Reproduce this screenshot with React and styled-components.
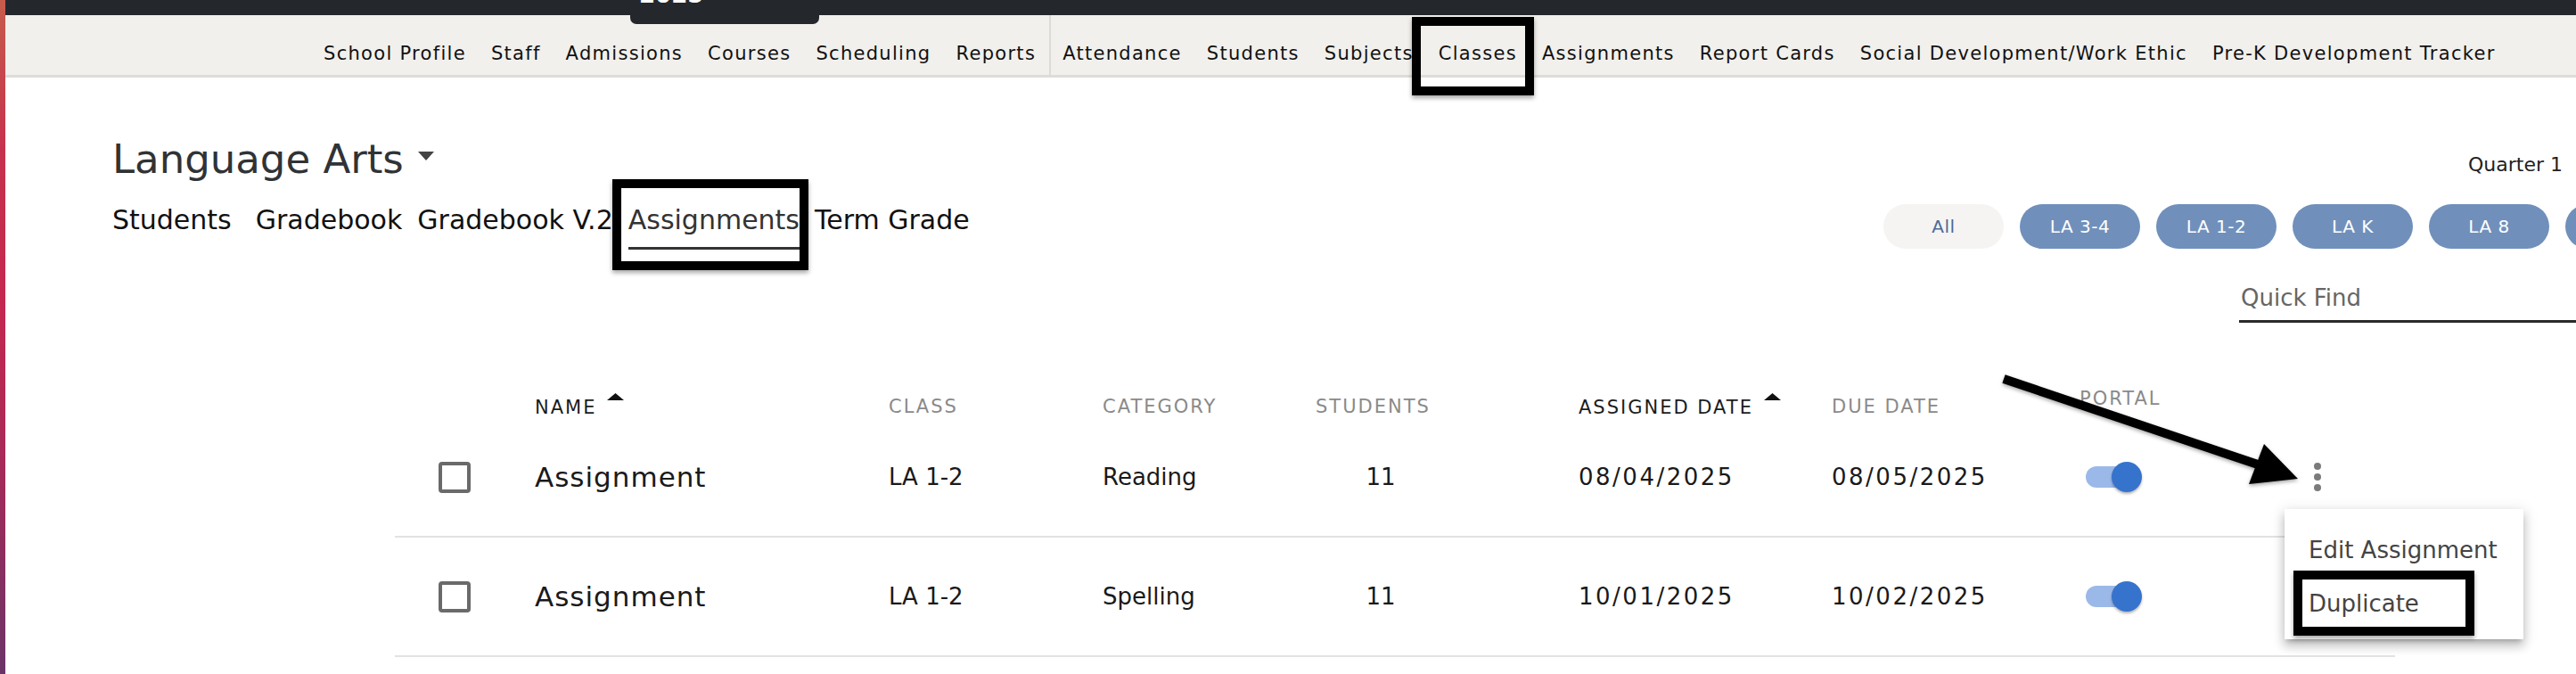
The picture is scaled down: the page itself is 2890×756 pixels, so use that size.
import React from "react";
import styled, { createGlobalStyle, css } from "styled-components";

const GlobalStyle = createGlobalStyle`
  html, body {
    margin: 0;
    padding: 0;
    background: #ffffff;
    overflow: hidden;
  }
  body {
    font-family: "DejaVu Sans", "Open Sans", sans-serif;
    color: #1a1a1a;
  }
  * {
    box-sizing: border-box;
  }
`;

const Screen = styled.div`
  display: flex;
  width: 2890px;
  height: 756px;
  overflow: hidden;
`;

const DesktopEdge = styled.div`
  width: 6px;
  flex-shrink: 0;
  background: linear-gradient(
    180deg,
    #c65c4c 0%,
    #c6324d 22%,
    #c4284f 45%,
    #a82a58 68%,
    #6a3468 100%
  );
`;

const Window = styled.div`
  position: relative;
  flex: 1;
  min-width: 0;
  background: #ffffff;
`;

const TopBar = styled.div`
  height: 17px;
  background: #24282d;
`;

const YearTab = styled.div`
  position: absolute;
  left: 701px;
  top: 0;
  width: 212px;
  height: 27px;
  padding-left: 10px;
  background: #24282d;
  border-radius: 0 0 7px 7px;
  overflow: hidden;
  z-index: 2;

  span {
    display: block;
    margin-top: -19px;
    font-size: 26px;
    line-height: 26px;
    font-weight: bold;
    color: #ffffff;
  }
`;

const NavBar = styled.nav`
  display: flex;
  align-items: stretch;
  gap: 28px;
  height: 70px;
  padding-left: 357px;
  background: #f1f0ec;
  border-bottom: 3px solid #dddcd7;
`;

const NavGroup = styled.div`
  display: flex;
  align-items: center;
  gap: 28px;
  padding-top: 19px;
  ${(p) =>
    p.$divided &&
    css`
      border-left: 2px solid #dcdbd6;
      margin-left: -13px;
      padding-left: 13px;
    `}
`;

const NavLink = styled.a`
  font-size: 21px;
  letter-spacing: 1.3px;
  color: #111111;
  white-space: nowrap;
`;

const Content = styled.main`
  padding: 64px 15px 0 120px;
`;

const TitleRow = styled.div`
  display: flex;
  justify-content: space-between;
  align-items: center;
  height: 56px;
`;

const Title = styled.h1`
  margin: 0;
  display: flex;
  align-items: center;
  font-size: 45px;
  line-height: 56px;
  font-weight: normal;
  color: #303336;
  white-space: nowrap;
`;

const TitleCaret = styled.svg`
  margin-left: 16px;
  margin-bottom: 8px;
`;

const Quarter = styled.div`
  margin-top: 12px;
  font-size: 22px;
  line-height: 28px;
  color: #222222;
`;

const TabsRow = styled.div`
  display: flex;
  justify-content: space-between;
  align-items: center;
  height: 53px;
  margin-top: 20px;
`;

const Tabs = styled.div`
  display: flex;
  gap: 17px;
  align-self: stretch;
`;

const Tab = styled.a`
  font-size: 30px;
  line-height: 40px;
  padding-bottom: 10px;
  border-bottom: 3px solid ${(p) => (p.$active ? "#333333" : "transparent")};
  color: ${(p) => (p.$active ? "#333333" : "#111111")};
  white-space: nowrap;

  &:first-child {
    margin-right: 10px;
  }
`;

const Pills = styled.div`
  display: flex;
  gap: 18px;
  flex-shrink: 0;
  margin-right: -291px;
`;

const Pill = styled.button`
  width: 135px;
  height: 50px;
  border: none;
  border-radius: 25px;
  padding: 0;
  font-family: inherit;
  font-size: 20px;
  letter-spacing: 0.5px;
  background: ${(p) => (p.$all ? "#f5f4f2" : "#7090bb")};
  color: ${(p) => (p.$all ? "#4c6a99" : "#ffffff")};
`;

const QuickRow = styled.div`
  display: flex;
  justify-content: flex-end;
  margin-top: 37px;
`;

const QuickFind = styled.input`
  width: 420px;
  height: 45px;
  margin-right: -57px;
  padding: 0 0 8px 2px;
  border: none;
  border-bottom: 3px solid #2a2a2a;
  outline: none;
  background: transparent;
  font-family: inherit;
  font-size: 26px;
  line-height: 34px;
  color: #333333;

  &::placeholder {
    color: #666666;
  }
`;

const gridColumns = css`
  display: grid;
  grid-template-columns: 157px 397px 240px 239px 295px 284px 278px 263px 91px;
  align-items: center;
`;

const Table = styled.div`
  width: 2244px;
  margin: 79px 0 0 317px;
`;

const HeaderRow = styled.div`
  ${gridColumns};
  height: 28px;
`;

const HeadCell = styled.div`
  font-size: 21px;
  line-height: 28px;
  letter-spacing: 2px;
  color: ${(p) => (p.$active ? "#1c1c1c" : "#8a8a8a")};
  white-space: nowrap;
  ${(p) => p.$raised && "margin-top: -18px;"}
`;

const SortCaret = styled.svg`
  margin-left: 12px;
  vertical-align: 15px;
`;

const Row = styled.div`
  ${gridColumns};
  height: 134px;
  border-bottom: 2px solid #e2e2e2;
`;

const Checkbox = styled.span`
  display: block;
  width: 36px;
  height: 35px;
  margin-left: 49px;
  border: 4px solid #6a6a6a;
  border-radius: 4px;
`;

const Cell = styled.div`
  font-size: ${(p) => (p.$large ? "31px" : "26px")};
  letter-spacing: ${(p) => (p.$large ? "1px" : p.$date ? "2.5px" : "0")};
  color: #1a1a1a;
  white-space: nowrap;
  ${(p) =>
    p.$centered &&
    css`
      width: 146px;
      text-align: center;
    `}
`;

const Switch = styled.div`
  position: relative;
  width: 63px;
  height: 34px;
  margin-left: 7px;
`;

const SwitchTrack = styled.span`
  position: absolute;
  left: 0;
  top: 5px;
  width: 58px;
  height: 24px;
  border-radius: 12px;
  background: #9bb9e8;
`;

const SwitchKnob = styled.span`
  position: absolute;
  right: 0;
  top: 0;
  width: 34px;
  height: 34px;
  border-radius: 50%;
  background: #3673cd;
  box-shadow: 0 2px 3px rgba(0, 0, 0, 0.3);
`;

const Kebab = styled.svg`
  display: block;
`;

const Menu = styled.ul`
  position: absolute;
  left: 2557px;
  top: 571px;
  width: 268px;
  height: 146px;
  margin: 0;
  padding: 16px 0 10px;
  list-style: none;
  background: #ffffff;
  box-shadow: 0 5px 5px -3px rgba(0, 0, 0, 0.2),
    0 8px 10px 1px rgba(0, 0, 0, 0.14), 0 3px 14px 2px rgba(0, 0, 0, 0.12);
  z-index: 3;
`;

const MenuItem = styled.li`
  height: 60px;
  padding-left: 27px;
  font-size: 26px;
  line-height: 60px;
  color: #444444;
  white-space: nowrap;
`;

const Callout = styled.div`
  position: absolute;
  left: ${(p) => p.$x}px;
  top: ${(p) => p.$y}px;
  width: ${(p) => p.$w}px;
  height: ${(p) => p.$h}px;
  border: 10px solid #000000;
  box-shadow: 0 3px 5px rgba(0, 0, 0, 0.35);
  z-index: 4;
  pointer-events: none;
`;

const Arrow = styled.svg`
  position: absolute;
  left: 2230px;
  top: 410px;
  z-index: 4;
  overflow: visible;
`;

const primaryNav = ["School Profile", "Staff", "Admissions", "Courses", "Scheduling", "Reports"];
const classNav = [
  "Attendance",
  "Students",
  "Subjects",
  "Classes",
  "Assignments",
  "Report Cards",
  "Social Development/Work Ethic",
  "Pre-K Development Tracker",
];
const tabs = ["Students", "Gradebook", "Gradebook V.2", "Assignments", "Term Grade"];
const pills = ["All", "LA 3-4", "LA 1-2", "LA K", "LA 8", "LA 5-6", "LA 7"];

const assignments = [
  { name: "Assignment", cls: "LA 1-2", category: "Reading", students: 11, assigned: "08/04/2025", due: "08/05/2025" },
  { name: "Assignment", cls: "LA 1-2", category: "Spelling", students: 11, assigned: "10/01/2025", due: "10/02/2025" },
];

const Caret = () => (
  <SortCaret width="19" height="8" viewBox="0 0 19 8">
    <polygon points="9.5,0 19,8 0,8" fill="#111" />
  </SortCaret>
);

const App = () => {
  return (
    <Screen>
      <GlobalStyle />
      <DesktopEdge />
      <Window>
        <TopBar />
        <YearTab>
          <span>2025</span>
        </YearTab>
        <NavBar>
          <NavGroup>
            {primaryNav.map((item) => (
              <NavLink key={item}>{item}</NavLink>
            ))}
          </NavGroup>
          <NavGroup $divided>
            {classNav.map((item) => (
              <NavLink key={item}>{item}</NavLink>
            ))}
          </NavGroup>
        </NavBar>

        <Content>
          <TitleRow>
            <Title>
              Language Arts
              <TitleCaret width="18" height="10" viewBox="0 0 18 10">
                <polygon points="0,0 18,0 9,10" fill="#444" />
              </TitleCaret>
            </Title>
            <Quarter>Quarter 1</Quarter>
          </TitleRow>

          <TabsRow>
            <Tabs>
              {tabs.map((t) => (
                <Tab key={t} $active={t === "Assignments"}>
                  {t}
                </Tab>
              ))}
            </Tabs>
            <Pills>
              {pills.map((p) => (
                <Pill key={p} $all={p === "All"}>
                  {p}
                </Pill>
              ))}
            </Pills>
          </TabsRow>

          <QuickRow>
            <QuickFind placeholder="Quick Find" />
          </QuickRow>

          <Table>
            <HeaderRow>
              <div />
              <HeadCell $active>
                NAME
                <Caret />
              </HeadCell>
              <HeadCell>CLASS</HeadCell>
              <HeadCell>CATEGORY</HeadCell>
              <HeadCell>STUDENTS</HeadCell>
              <HeadCell $active>
                ASSIGNED DATE
                <Caret />
              </HeadCell>
              <HeadCell>DUE DATE</HeadCell>
              <HeadCell $raised>PORTAL</HeadCell>
              <div />
            </HeaderRow>
            {assignments.map((a, i) => (
              <Row key={i}>
                <Checkbox />
                <Cell $large>{a.name}</Cell>
                <Cell>{a.cls}</Cell>
                <Cell>{a.category}</Cell>
                <Cell $centered>{a.students}</Cell>
                <Cell $date>{a.assigned}</Cell>
                <Cell $date>{a.due}</Cell>
                <Switch>
                  <SwitchTrack />
                  <SwitchKnob />
                </Switch>
                <div>
                  {i === 0 && (
                    <Kebab width="8" height="32" viewBox="0 0 8 32">
                      <circle cx="4" cy="4" r="4" fill="#7b7b7b" />
                      <circle cx="4" cy="16" r="4" fill="#7b7b7b" />
                      <circle cx="4" cy="28" r="4" fill="#7b7b7b" />
                    </Kebab>
                  )}
                </div>
              </Row>
            ))}
          </Table>
        </Content>

        <Menu>
          <MenuItem>Edit Assignment</MenuItem>
          <MenuItem>Duplicate</MenuItem>
        </Menu>

        <Callout $x={1578} $y={19} $w={137} $h={88} />
        <Callout $x={681} $y={201} $w={220} $h={102} />
        <Callout $x={2567} $y={640} $w={203} $h={73} />

        <Arrow width="360" height="150" viewBox="0 0 360 150">
          <defs>
            <filter id="arrowShadow" x="-10%" y="-10%" width="120%" height="130%">
              <feDropShadow dx="0" dy="2" stdDeviation="2" floodColor="#000" floodOpacity="0.35" />
            </filter>
          </defs>
          <g filter="url(#arrowShadow)">
            <line x1="12" y1="15" x2="300" y2="112" stroke="#000" strokeWidth="10" />
            <polygon points="342,127 304,88 287,133" fill="#000" />
          </g>
        </Arrow>
      </Window>
    </Screen>
  );
};

export default App;
